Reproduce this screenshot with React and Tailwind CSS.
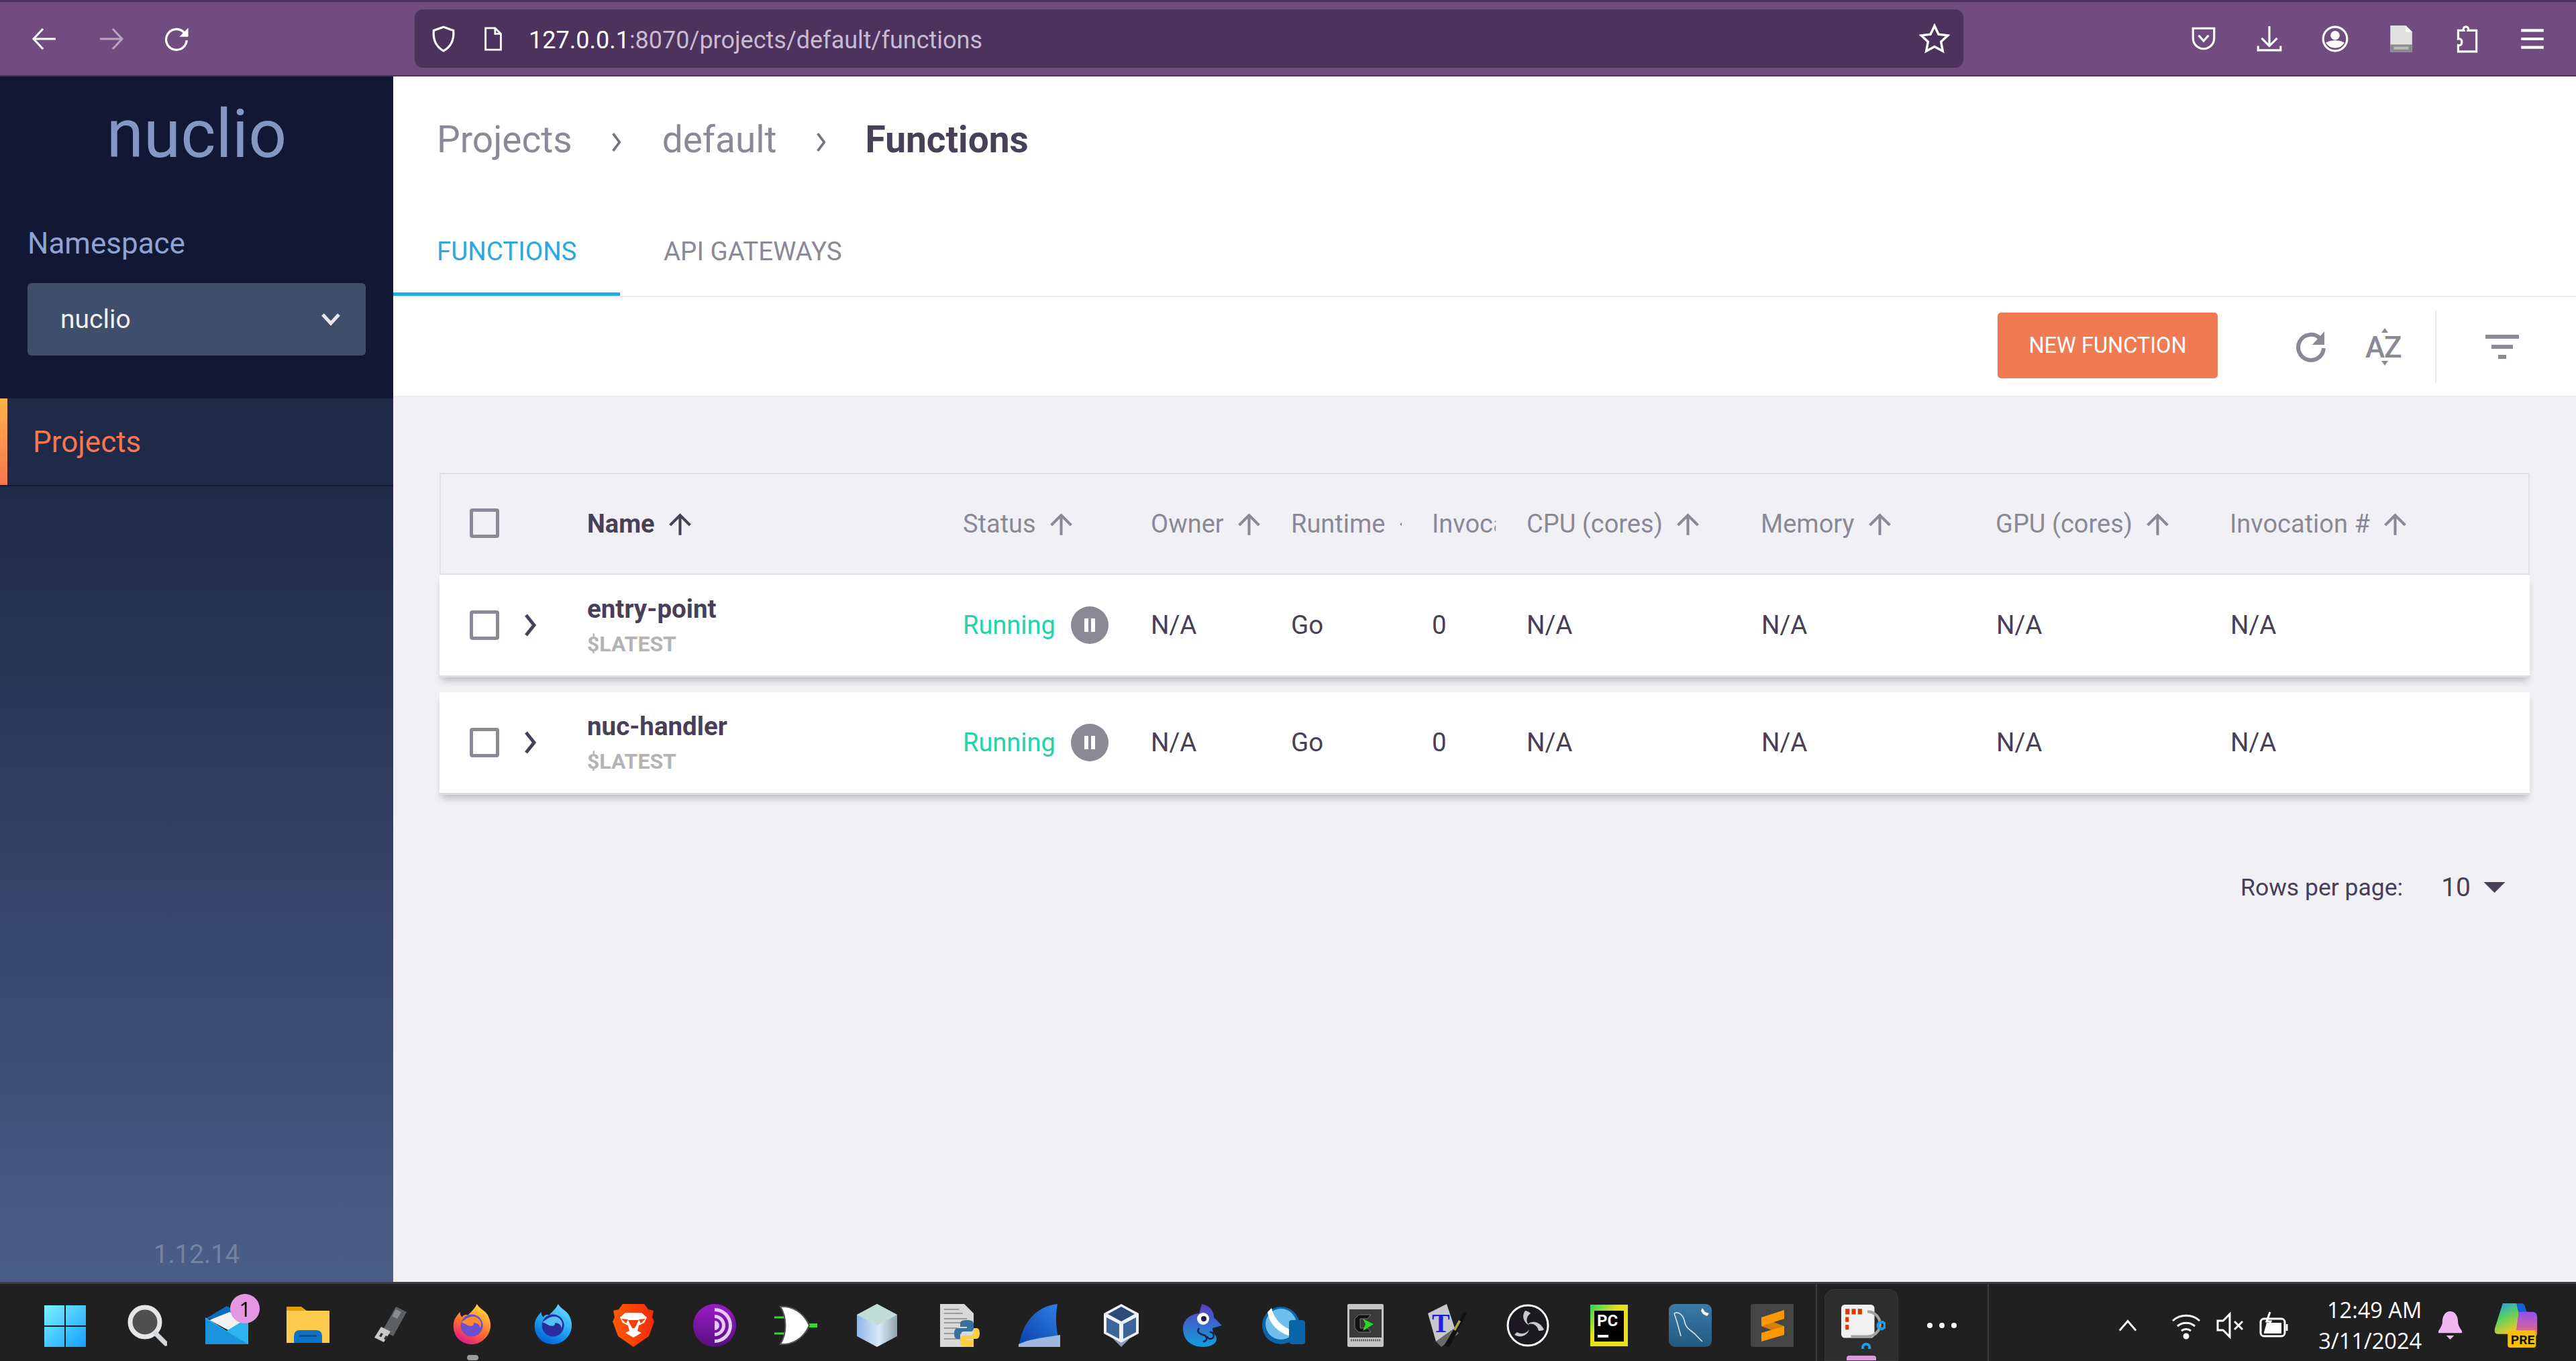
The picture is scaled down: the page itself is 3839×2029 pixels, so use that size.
const font = "font-['Roboto',sans-serif]";

const columns = "grid grid-cols-[220px_560px_280px_209px_210px_141px_349px_350px_349px_1fr] items-center";
const rowColumns = "grid grid-cols-[220px_560px_280px_209px_210px_141px_350px_350px_349px_1fr] items-center";

const functions = [
  { name: "entry-point", tag: "$LATEST" },
  { name: "nuc-handler", tag: "$LATEST" },
];

function SortArrow({ color = "#8b8996" }) {
  return (
    <svg viewBox="0 0 24 24" className="w-[49px] h-[49px] shrink-0" fill={color}>
      <path d="M4 12l1.41 1.41L11 7.83V20h2V7.83l5.58 5.59L20 12l-8-8-8 8z" />
    </svg>
  );
}

function HeadCell({ label, bold, clip }) {
  return (
    <div className={`flex items-center gap-[13px] overflow-hidden ${clip || ""}`}>
      <span className={`text-[38px] whitespace-nowrap ${bold ? "font-bold text-[#474056]" : "text-[#8b8996]"}`}>{label}</span>
      <SortArrow color={bold ? "#474056" : "#8b8996"} />
    </div>
  );
}

function Check() {
  return <div className="w-[44px] h-[44px] rounded-[4px] border-[5px] border-[#8b8996]" />;
}

function Row({ fn }) {
  return (
    <div className={`${rowColumns} h-[153px] bg-white border-b-[3px] border-[#dcdce0] shadow-[0_8px_10px_-3px_rgba(60,60,80,0.3)] ${font}`}>
      <div className="flex items-center pl-[45px] gap-[35px]">
        <Check />
        <svg viewBox="0 0 24 36" className="w-[24px] h-[36px]" fill="none" stroke="#474056" strokeWidth="5">
          <path d="M5 3l12 15L5 33" />
        </svg>
      </div>
      <div className="flex flex-col">
        <span className="text-[38.500px] font-bold leading-[50px] mt-[2px] text-[#474056]">{fn.name}</span>
        <span className="text-[32px] font-bold leading-[48px] mt-[3px] text-[#b4b4b4]">{fn.tag}</span>
      </div>
      <div className="flex items-center gap-[23px]">
        <span className="text-[38px] text-[#20d6a8]">Running</span>
        <div className="w-[56px] h-[56px] rounded-full bg-[#8b8996] flex items-center justify-center gap-[4px]">
          <div className="w-[6px] h-[20px] bg-white" />
          <div className="w-[6px] h-[20px] bg-white" />
        </div>
      </div>
      <span className="text-[38.500px] text-[#474056]">N/A</span>
      <span className="text-[38.500px] text-[#474056]">Go</span>
      <span className="text-[38.500px] text-[#474056]">0</span>
      <span className="text-[38.500px] text-[#474056]">N/A</span>
      <span className="text-[38.500px] text-[#474056]">N/A</span>
      <span className="text-[38.500px] text-[#474056]">N/A</span>
      <span className="text-[38.500px] text-[#474056]">N/A</span>
    </div>
  );
}

/* browser toolbar icons */
function Tb({ children, className }) {
  return (
    <svg viewBox="0 0 40 40" fill="none" stroke="#fff" strokeWidth="3" className={className}>
      {children}
    </svg>
  );
}

function BrowserBar() {
  return (
    <div className="h-[114px] shrink-0 bg-[#704c80] border-t-[3px] border-b-[2px] border-[#4e325e] flex items-center">
      <div className="w-[618px] shrink-0 flex items-center">
        <Tb className="w-[40px] h-[40px] ml-[46px]"><path d="M37 20H4M18 5L4 20l14 15" /></Tb>
        <Tb className="w-[40px] h-[40px] ml-[60px] opacity-50"><path d="M3 20h33M22 5l14 15-14 15" /></Tb>
        <Tb className="w-[44px] h-[44px] ml-[56px]"><path d="M33 22a14 14 0 1 1-4-11l5 5" /><path d="M35 5v12H23" fill="#fff" stroke="none" /></Tb>
      </div>
      <div className="w-[2308px] h-[87px] shrink-0 bg-[#4e325e] rounded-[12px] flex items-center pl-[22px] pr-[20px]">
        <Tb className="w-[42px] h-[42px]"><path d="M20 3l14 5c1 12-3 23-14 29C9 31 5 20 6 8z" /></Tb>
        <Tb className="w-[38px] h-[38px] ml-[34px]"><path d="M8 3h15l9 9v25H8zM23 3v9h9" /></Tb>
        <span className={`ml-[34px] mt-[4px] text-[36px] ${font} text-white`}>127.0.0.1<span className="text-[#c8bbd0]">:8070/projects/default/functions</span></span>
        <Tb className="w-[46px] h-[46px] ml-auto"><path d="M20 3l5.2 11 12 1.500-8.800 8.300 2.300 12L20 30l-10.700 5.800 2.300-12L2.800 15.500l12-1.500z" /></Tb>
      </div>
      <div className="flex items-center ml-[309px]">
        <div className="w-[98px] flex justify-center"><Tb className="w-[42px] h-[42px]"><path d="M5 5h30v14a15 15 0 0 1-30 0z" /><path d="M13 15l7 8 7-8" /></Tb></div>
        <div className="w-[98px] flex justify-center"><Tb className="w-[42px] h-[42px]"><path d="M20 2v28M9 19l11 11 11-11M4 30v6h32v-6" /></Tb></div>
        <div className="w-[98px] flex justify-center"><Tb className="w-[42px] h-[42px]"><circle cx="20" cy="20" r="17" /><circle cx="20" cy="15" r="5" fill="#fff" /><path d="M9 26c5-3 17-3 22 0-5 7-17 7-22 0z" fill="#fff" /></Tb></div>
        <div className="w-[98px] flex justify-center">
          <svg viewBox="0 0 40 40" className="w-[42px] h-[42px]"><path d="M5 1h22l9 9v29H5z" fill="#e2e2e2" /><path d="M27 1l9 9h-9z" fill="#fff" /><rect x="5" y="28" width="31" height="11" fill="#8a8a8a" /><rect x="10" y="31" width="21" height="4" fill="#bcbcbc" /></svg>
        </div>
        <div className="w-[98px] flex justify-center"><Tb className="w-[42px] h-[42px]"><path d="M8 8h8c-3-7 9-7 6 0h12v30H8v-9c7 2 7-11 0-9z" /></Tb></div>
        <div className="w-[98px] flex justify-center"><Tb className="w-[42px] h-[42px]" ><path d="M4 8h32M4 20h32M4 32h32" strokeWidth="4" /></Tb></div>
      </div>
    </div>
  );
}

function Sidebar() {
  return (
    <div className={`w-[586px] shrink-0 flex flex-col ${font}`}>
      <div className="h-[480px] bg-[#101835] px-[41px] flex flex-col">
        <div className="text-center text-[100px] leading-[110px] text-[#8497c2] mt-[31px]">nuclio</div>
        <div className="text-[44px] text-[#8fa2d0] mt-[82px] leading-[52px]">Namespace</div>
        <div className="mt-[33px] h-[108px] w-[504px] rounded-[6px] bg-[#3f4e6b] flex items-center justify-between pl-[49px] pr-[37px]">
          <span className="text-[39px] text-[#eef0f4]">nuclio</span>
          <svg viewBox="0 0 30 20" className="w-[30px] h-[20px]" fill="none" stroke="#e6e8ee" strokeWidth="5"><path d="M3 3l12 13L27 3" /></svg>
        </div>
      </div>
      <div className="h-[131px] bg-[#1f2a48] border-b-[2px] border-[#141c38] flex items-center relative pl-[49px]">
        <div className="absolute left-0 top-0 bottom-0 w-[11px] bg-gradient-to-b from-[#ffb24a] to-[#f6764f]" />
        <span className="text-[44px] text-[#f6764f]">Projects</span>
      </div>
      <div className="flex-1 bg-gradient-to-b from-[#1f2a48] to-[#4b5e88] flex flex-col justify-end items-center pb-[12px]">
        <span className="text-[38.500px] text-[#75839f]">1.12.14</span>
      </div>
    </div>
  );
}

function Content() {
  return (
    <div className={`flex-1 flex flex-col bg-[#f1f1f5] ${font}`}>
      <div className="h-[329px] bg-white border-b-[2px] border-[#ececee] flex flex-col">
        <div className="flex items-center pl-[65px] h-[188px] text-[55px]">
          <span className="text-[#8b8996]">Projects</span>
          <svg viewBox="0 0 16 30" className="w-[18px] h-[32px] ml-[57px] mt-[8px]" fill="none" stroke="#75727f" strokeWidth="3.500"><path d="M3 3l9 12-9 12" /></svg>
          <span className="text-[#8b8996] ml-[59px]">default</span>
          <svg viewBox="0 0 16 30" className="w-[18px] h-[32px] ml-[57px] mt-[8px]" fill="none" stroke="#75727f" strokeWidth="3.500"><path d="M3 3l9 12-9 12" /></svg>
          <span className="text-[#474056] font-bold ml-[57px]">Functions</span>
        </div>
        <div className="flex h-[139px]">
          <div className="w-[338px] h-[139px] pl-[65px] pt-[12px] flex items-center border-b-[5px] border-[#2ba8e0]">
            <span className="text-[38.500px] text-[#2ba8e0]">FUNCTIONS</span>
          </div>
          <div className="pl-[65px] pt-[12px] pb-[5px] flex items-center">
            <span className="text-[38.500px] text-[#8b8996]">API GATEWAYS</span>
          </div>
        </div>
      </div>
      <div className="h-[149px] bg-white border-b-[2px] border-[#ececee] flex items-center">
        <button className="ml-auto mb-[3px] w-[328px] h-[98px] rounded-[5px] bg-[#f07a52] text-white text-[32.500px]">NEW FUNCTION</button>
        <svg viewBox="0 0 48 52" className="w-[48px] h-[52px] ml-[115px]" fill="none" stroke="#8b8996" strokeWidth="6"><path d="M43 28a19 19 0 1 1-6-15" /><path d="M44 3v20H26z" fill="#8b8996" stroke="none" /></svg>
        <svg viewBox="0 0 60 56" className="w-[60px] h-[56px] ml-[56px]" fill="#8b8996"><path d="M30 0l5 7H25zM30 56l5-7H25z" /><text x="1" y="44" fontSize="44" fontWeight="500" fontFamily="Roboto">A</text><text x="29" y="44" fontSize="44" fontWeight="500" fontFamily="Roboto">Z</text></svg>
        <div className="w-[2px] h-[108px] bg-[#ececee] ml-[45px]" />
        <svg viewBox="0 0 50 36" className="w-[50px] h-[36px] ml-[73px] mr-[85px]" fill="#8b8996"><rect width="50" height="6" /><rect x="9" y="15" width="32" height="6" /><rect x="19" y="30" width="12" height="6" /></svg>
      </div>
      <div className="pl-[69px] pr-[69px] pt-[113px]">
        <div className={`${columns} h-[152px] shadow-[inset_0_0_0_2px_#e0e0e5]`}>
          <div className="pl-[45px] mb-[3px]"><Check /></div>
          <HeadCell label="Name" bold />
          <HeadCell label="Status" />
          <HeadCell label="Owner" />
          <HeadCell label="Runtime" clip="w-[165px]" />
          <HeadCell label="Invocation #" clip="w-[95px]" />
          <HeadCell label="CPU (cores)" />
          <HeadCell label="Memory" />
          <HeadCell label="GPU (cores)" />
          <HeadCell label="Invocation #" />
        </div>
        <div className="flex flex-col gap-[22px]">
          {functions.map((fn) => <Row key={fn.name} fn={fn} />)}
        </div>
        <div className="flex items-center justify-end mt-[109px] pr-[36px] text-[#474056]">
          <span className="text-[35.500px]">Rows per page:</span>
          <span className="text-[39px] ml-[57px]">10</span>
          <svg viewBox="0 0 32 16" className="w-[33px] h-[16px] ml-[19px]" fill="#474056"><path d="M0 0h32L16 16z" /></svg>
        </div>
      </div>
    </div>
  );
}

/* taskbar */
const I = ({ children }) => <svg viewBox="0 0 64 64" className="w-[64px] h-[64px]">{children}</svg>;

const icons = [
  <I key="win">
    <defs><linearGradient id="w" x1="0" y1="0" x2="1" y2="1"><stop offset="0" stopColor="#7ef0ff" /><stop offset="1" stopColor="#12a0ff" /></linearGradient></defs>
    <path d="M2 2h30v30H2zM34 2h30v30H34zM2 34h30v30H2zM34 34h30v30H34z" fill="url(#w)" />
  </I>,
  <I key="search">
    <g transform="translate(4 0)">
      <circle cx="27" cy="27" r="22" fill="#505050" stroke="#e4e6e8" strokeWidth="7" />
      <path d="M43 44l15 15" stroke="#d5d8da" strokeWidth="7" strokeLinecap="round" />
    </g>
  </I>,
  <I key="mail">
    <path d="M0 22L32 3l32 19z" fill="#0a6cc0" />
    <path d="M6 24L36 12l24 10-20 20z" fill="#f2f2f2" />
    <path d="M0 20l32 20 32-20v40H0z" fill="#2db4ee" />
    <path d="M0 22l64 38H0z" fill="#1a94de" />
  </I>,
  <I key="folder">
    <path d="M0 4h22l8 6h34v22H0z" fill="#e0a000" />
    <path d="M0 10h64v48H0z" fill="#ffcb4c" />
    <path d="M11 58V48q0-9 9-9h24q9 0 9 9v10z" fill="#0c74c8" />
    <rect x="19" y="46" width="26" height="3" fill="#0a4f8f" />
  </I>,
  <I key="usb">
    <path d="M22 40L42 4l16 8-20 36z" fill="#5c6063" />
    <path d="M36 18l6-10 8 4-6 10z" fill="#8a8d90" />
    <path d="M10 50l10-16 14 7-10 16z" fill="#c8c8c8" />
    <path d="M17 48l3-5 3 1.500-3 5zM24 52l3-5 3 1.500-3 5z" fill="#333" />
  </I>,
  <I key="ff">
    <defs><linearGradient id="f" x1="0.8" y1="0" x2="0.3" y2="1"><stop offset="0" stopColor="#ffe040" /><stop offset="0.6" stopColor="#ff6a30" /><stop offset="1" stopColor="#e0188a" /></linearGradient></defs>
    <g transform="translate(4 0) scale(.97)">
      <path d="M38 0c4 8 14 10 18 20 10 22-8 42-26 42C12 62 0 48 2 30c1-8 5-12 10-18 0 4 1 6 3 8 3-4 6-4 9-3 5-5 10-9 14-17z" fill="url(#f)" />
      <circle cx="30" cy="33" r="17" fill="#6b4fd0" />
      <path d="M14 28c6-4 14-12 24-7 6 4 8 10 5 16-1-7-6-8-10-8 1 5-6 6-11 3-3-2-5-3-8-4z" fill="#ff8a30" />
    </g>
  </I>,
  <I key="tb">
    <defs><linearGradient id="t" x1="0.8" y1="0" x2="0.3" y2="1"><stop offset="0" stopColor="#6fe0ff" /><stop offset="0.6" stopColor="#1a9cf0" /><stop offset="1" stopColor="#0060d8" /></linearGradient></defs>
    <g transform="translate(4 0) scale(.97)">
      <path d="M38 0c4 8 14 10 18 20 10 22-8 42-26 42C12 62 0 48 2 30c1-8 5-12 10-18 0 4 1 6 3 8 3-4 6-4 9-3 5-5 10-9 14-17z" fill="url(#t)" />
      <circle cx="30" cy="33" r="17" fill="#2a2c9c" />
      <path d="M14 28c6-4 14-12 24-7 6 4 8 10 5 16-1-7-6-8-10-8 1 5-6 6-11 3-3-2-5-3-8-4z" fill="#55c0f5" />
    </g>
  </I>,
  <I key="brave">
    <defs><linearGradient id="b" x1="0" y1="0" x2="1" y2="0"><stop offset="0" stopColor="#ff5a00" /><stop offset="1" stopColor="#f52a10" /></linearGradient></defs>
    <path d="M16 0h32l6 8 8 2-2 10 3 6-8 22-23 16L9 48 1 26l3-6L2 10l8-2z" fill="url(#b)" />
    <path d="M12 20l8-7h24l8 7-4 8-8 4-2 8 6 3-12 7-12-7 6-3-2-8-8-4z" fill="#fff" />
    <path d="M24 24h16l-6 12h-4zM14 22l10 1-3 6zM50 22l-10 1 3 6z" fill="#f4400c" />
  </I>,
  <I key="tor">
    <defs><linearGradient id="o" x1="0" y1="0" x2="0" y2="1"><stop offset="0" stopColor="#9a1cc8" /><stop offset="1" stopColor="#561080" /></linearGradient></defs>
    <circle cx="32" cy="32" r="32" fill="url(#o)" />
    <path d="M32 6a26 26 0 0 1 0 52v-5a21 21 0 0 0 0-42zM32 16a16 16 0 0 1 0 32v-5a11 11 0 0 0 0-22zM32 25a7 7 0 0 1 0 14z" fill="#e6ccf2" />
  </I>,
  <I key="gate">
    <path d="M0 20h16M0 44h16" stroke="#3bd43b" strokeWidth="3" />
    <path d="M52 32h12" stroke="#22e022" strokeWidth="6" />
    <path d="M9 4h7c18 2 30 14 36 28-6 14-18 26-36 28H9c10-16 10-40 0-56z" fill="#fff" stroke="#555" strokeWidth="2" />
  </I>,
  <I key="cube">
    <defs><linearGradient id="c" x1="0" y1="0" x2="1" y2="0"><stop offset="0" stopColor="#8db4e6" /><stop offset="0.55" stopColor="#dbe9fa" /><stop offset="1" stopColor="#8ea4ae" /></linearGradient></defs>
    <path d="M32 0l30 16v32L32 64 2 48V16z" fill="url(#c)" />
    <path d="M32 0l30 16-30 16L2 16z" fill="#c2dcd6" />
  </I>,
  <I key="py">
    <path d="M4 0h36l14 14v50H4z" fill="#d8d8d8" />
    <path d="M10 8h22M10 14h28M10 22h34M10 28h26M10 36h20M10 44h26M10 52h34" stroke="#888" strokeWidth="1.500" />
    <path d="M44 24c-8 0-10 2-10 6v4h10v2H30c-3 0-5 3-5 8 0 6 2 8 5 8h4v-6c0-3 3-5 6-5h9c3 0 5-2 5-5v-6c0-4-3-6-10-6z" fill="#36709f" />
    <path d="M44 64c8 0 10-2 10-6v-4H44v-2h14c3 0 5-3 5-8 0-6-2-8-5-8h-4v6c0 3-3 5-6 5h-9c-3 0-5 2-5 5v6c0 4 3 6 10 6z" fill="#ffcf40" />
  </I>,
  <I key="fin">
    <defs><linearGradient id="s" x1="1" y1="0" x2="0" y2="1"><stop offset="0" stopColor="#2f80e6" /><stop offset="1" stopColor="#0a3fa8" /></linearGradient></defs>
    <path d="M58 0c-4 20-2 40 4 64H0C4 36 20 4 58 0z" fill="url(#s)" />
    <path d="M0 60c16-8 40-10 62-14v18H0z" fill="#9fb8de" />
  </I>,
  <I key="vbox">
    <path d="M32 0l26 14v30L32 58 6 44V14z" fill="#eef1f6" />
    <path d="M32 4l20 11-20 11-20-11z" fill="#2c4a7a" />
    <path d="M10 20l19 10v22L10 42zM54 20L35 30v22l19-10z" fill="#3f6499" />
    <path d="M18 50l14 14 14-14-14 8z" fill="#8f9dc0" />
  </I>,
  <I key="cham">
    <defs><linearGradient id="k" x1="0" y1="0" x2="0" y2="1"><stop offset="0" stopColor="#5c3cc0" /><stop offset="1" stopColor="#10a0d8" /></linearGradient></defs>
    <g transform="translate(3 0)">
      <path d="M28 0c10 2 18 8 18 20l12 12-14 4c0 10 6 8 6 16 0 8-10 12-20 12C10 64 0 52 0 36 0 22 14 14 24 14z" fill="url(#k)" />
      <circle cx="30" cy="22" r="9" fill="#fff" /><circle cx="31" cy="22" r="4" fill="#1c1c50" />
      <path d="M24 36c-4 6 0 8 6 10 8 2 6 10 0 10M36 48a5 5 0 1 0 4-6" fill="none" stroke="#16204a" strokeWidth="2.500" />
    </g>
  </I>,
  <I key="sphere">
    <circle cx="28" cy="32" r="28" fill="#0a66a8" />
    <circle cx="28" cy="30" r="23" fill="#6ec0ec" />
    <path d="M8 12c2 16 14 30 34 36l4-8C30 34 18 24 14 6z" fill="#fff" />
    <path d="M40 28q0-4 4-4h16q4 0 4 4v28q0 4-4 4H46q-6 0-6-4z" fill="#0a66a8" />
  </I>,
  <I key="term">
    <rect x="5" y="0" width="54" height="64" rx="2" fill="#c4c4c4" />
    <rect x="8" y="8" width="48" height="42" fill="#3a3a3a" />
    <path d="M40 16H22l-6 6v14l6 6h18l-5-6H24V22h11z" fill="#111" stroke="#777" strokeWidth="1" />
    <path d="M28 22l16 8-16 10 4-10z" fill="#22dd22" />
    <path d="M10 54h44" stroke="#666" strokeWidth="3" strokeDasharray="2 1" />
  </I>,
  <I key="t">
    <path d="M4 14L32 0l12 36-28 20z" fill="#c8c8cc" />
    <path d="M16 56l28-20 6 8-26 20z" fill="#6a6a6a" />
    <text x="10" y="42" fontSize="40" fontWeight="700" fontFamily="Liberation Serif" fill="#2020e0">T</text>
    <path d="M28 62l30-50 4 2-26 50z" fill="#111" />
    <path d="M42 38l8-14 3 2-8 14z" fill="#b8a040" />
  </I>,
  <I key="obs">
    <circle cx="32" cy="32" r="30" fill="#1c1a20" stroke="#fff" strokeWidth="3" />
    <path d="M28 10c-6 8-2 18 6 22-6-6-4-14 2-18-2-2-6-4-8-4zM56 38c-6-12-18-14-24-8 8-2 14 2 16 10 2 0 6 0 8-2zM12 46c10 6 20 0 22-8-4 6-12 8-18 4-2 1-3 3-4 4z" fill="#c8c8c8" />
  </I>,
  <I key="pc">
    <defs><linearGradient id="p" x1="0" y1="0" x2="1" y2="1"><stop offset="0" stopColor="#28d45c" /><stop offset="0.4" stopColor="#e4e01c" /><stop offset="1" stopColor="#eae020" /></linearGradient></defs>
    <rect x="4" y="1" width="56" height="62" fill="url(#p)" />
    <rect x="10" y="10" width="44" height="46" fill="#000" />
    <text x="14" y="33" fontSize="24" fontWeight="700" fontFamily="Roboto" fill="#fff">PC</text>
    <rect x="15" y="46" width="16" height="4" fill="#fff" />
  </I>,
  <I key="mysql">
    <defs><linearGradient id="m" x1="0" y1="0" x2="0" y2="1"><stop offset="0" stopColor="#3b7aa8" /><stop offset="1" stopColor="#235a80" /></linearGradient></defs>
    <rect x="0" y="0" width="64" height="64" rx="9" fill="url(#m)" />
    <path d="M8 14c8-4 14 4 16 14 2 10 12 12 18 20l8 8M8 14l4 12 6 22" fill="none" stroke="#dcebf4" strokeWidth="1.500" />
    <path d="M50 6l4 6 6 2-3 4-6-3-3-5z" fill="#fff" />
  </I>,
  <I key="subl">
    <rect x="0" y="0" width="66" height="64" rx="3" fill="#454545" />
    <path d="M16 20L50 33v13L16 33z" fill="#d97f00" />
    <path d="M16 20L50 9v13L16 33zM16 43L50 33v13L16 56z" fill="#ff9800" />
  </I>,
];

function Taskbar() {
  return (
    <div className="h-[118px] shrink-0 bg-[#202020] border-t-[3px] border-[#3d3d3d] pt-[9px] flex items-center text-white overflow-hidden">
      <div className="flex pl-[35px]">
        {icons.map((icon, i) => (
          <div key={i} className="w-[121.200px] flex justify-center relative">
            {icon}
            {i === 2 && (
              <span className="absolute left-[66px] -top-[15px] w-[44px] h-[44px] rounded-full bg-[#e396e3] text-black text-[31px] flex items-center justify-center font-['Open_Sans',sans-serif]">1</span>
            )}
            {i === 5 && <span className="absolute left-[55px] top-[76px] w-[17px] h-[8px] rounded-full bg-[#9b9b9b]" />}
          </div>
        ))}
      </div>
      <div className="w-[2px] self-stretch -mt-[9px] bg-[#3d3d3d] ml-[5px]" />
      <div className="w-[110px] self-end h-[107px] ml-[11px] rounded-t-[14px] bg-[#2d2d2d] border border-[#383838] flex flex-col items-center relative">
        <svg viewBox="0 0 64 64" className="w-[66px] h-[66px] mt-[22px] ml-[6px]">
          <rect x="0" y="0" width="48" height="48" rx="5" fill="#f0f0f0" />
          <path d="M6 6h6v8H6zM15 6h6v8h-6zM24 6h6v8h-6zM6 18h5v7H6zM6 29h5v7H6z" fill="#d83b01" />
          <path d="M14 46h24a4 4 0 0 0 0-36" fill="none" stroke="#a0a4a8" strokeWidth="4" />
          <circle cx="58" cy="30" r="5" fill="none" stroke="#1e9de0" strokeWidth="4" />
          <circle cx="36" cy="62" r="5" fill="none" stroke="#1e9de0" strokeWidth="4" />
        </svg>
        <span className="absolute left-[32px] bottom-0 w-[44px] h-[7px] rounded-t-[4px] bg-[#e396e3]" />
      </div>
      <div className="flex gap-[10px] ml-[43px] w-[44px] justify-center">
        <span className="w-[8px] h-[8px] rounded-full bg-white shrink-0" />
        <span className="w-[8px] h-[8px] rounded-full bg-white shrink-0" />
        <span className="w-[8px] h-[8px] rounded-full bg-white shrink-0" />
      </div>
      <div className="w-[2px] self-stretch -mt-[9px] bg-[#3d3d3d] ml-[46px]" />
      <svg viewBox="0 0 30 20" className="w-[28px] h-[20px] ml-[193px]" fill="none" stroke="#fff" strokeWidth="3"><path d="M2 18L15 3l13 15" /></svg>
      <svg viewBox="0 0 44 44" className="w-[44px] h-[44px] ml-[51px]" fill="none" stroke="#fff" strokeWidth="3"><path d="M2 15a30 30 0 0 1 40 0M9 23a20 20 0 0 1 26 0M15 30a11 11 0 0 1 14 0" /><circle cx="22" cy="38" r="3" fill="#fff" /></svg>
      <svg viewBox="0 0 44 44" className="w-[44px] h-[44px] ml-[22px]" fill="none" stroke="#fff" strokeWidth="3"><path d="M3 15h8L21 5v34L11 29H3zM28 16l12 12M40 16L28 28" /></svg>
      <svg viewBox="0 0 44 44" className="w-[44px] h-[44px] ml-[21px]" fill="none" stroke="#fff" strokeWidth="3"><rect x="2" y="12" width="36" height="26" rx="5" /><path d="M41 20v10" /><path d="M7 32l4-14h22v16H7z" fill="#fff" stroke="none" /><path d="M16 2l-5 14h6l-4 12" /></svg>
      <div className="w-[170px] ml-[28px] flex flex-col items-end font-['Open_Sans',sans-serif] text-[32.500px] leading-[46px]">
        <span className="whitespace-nowrap">12:49 AM</span>
        <span className="whitespace-nowrap">3/11/2024</span>
      </div>
      <svg viewBox="0 0 36 44" className="w-[35px] h-[43px] ml-[25px]" fill="#f0b8f0"><path d="M18 0c8 0 12 8 12 16 0 6 4 10 6 14v3H0v-3c2-4 6-8 6-14C6 8 10 0 18 0z" /><path d="M12 37h12l-6 6z" /></svg>
      <svg viewBox="0 0 72 72" className="w-[66px] h-[66px] ml-[48px]">
        <defs><linearGradient id="cp" x1="0" y1="0" x2="0.5" y2="1"><stop offset="0" stopColor="#18a0f0" /><stop offset="0.5" stopColor="#60d060" /><stop offset="1" stopColor="#f8c820" /></linearGradient><linearGradient id="cq" x1="0.5" y1="0" x2="0.5" y2="1"><stop offset="0" stopColor="#9050f0" /><stop offset="1" stopColor="#f87070" /></linearGradient></defs>
        <path d="M14 0h24c6 0 8 4 9 10l5 20-18 20H6C0 50 0 44 2 38z" fill="url(#cp)" />
        <path d="M36 0h8c4 0 6 2 7 8l3 8-14 0z" fill="#1060d8" />
        <path d="M40 14h22c6 0 8 4 8 10v24c0 6-4 8-10 8H34z" fill="url(#cq)" />
        <rect x="22" y="44" width="46" height="28" rx="4" fill="#f8c000" />
        <text x="27" y="66" fontSize="21" fontWeight="700" fontFamily="Roboto" fill="#111">PRE</text>
      </svg>
    </div>
  );
}

export default function App() {
  return (
    <div className="w-[3839px] h-[2029px] flex flex-col overflow-hidden">
      <BrowserBar />
      <div className="flex-1 flex min-h-0">
        <Sidebar />
        <Content />
      </div>
      <Taskbar />
    </div>
  );
}
